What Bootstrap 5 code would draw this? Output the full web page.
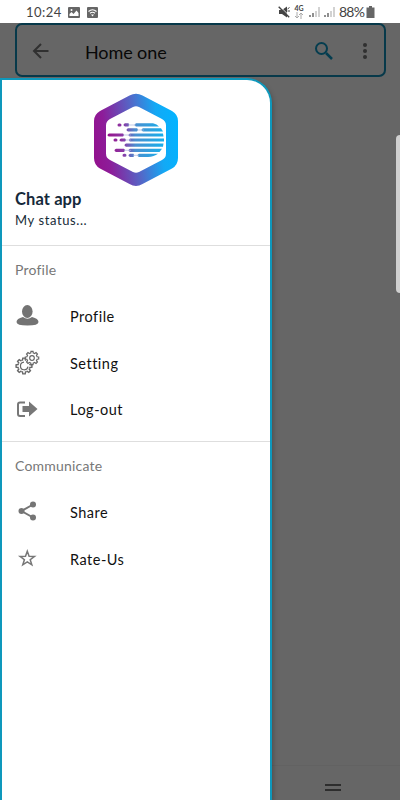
<!DOCTYPE html>
<html lang="en">
<head>
<meta charset="utf-8">
<meta name="viewport" content="width=device-width, initial-scale=1">
<title>Chat app</title>
<link href="https://cdn.jsdelivr.net/npm/bootstrap@5.3.0/dist/css/bootstrap.min.css" rel="stylesheet">
<style>
body{font-family:Lato,"Noto Sans",sans-serif;background:#666;color:#111}
svg{display:block;flex:none}
.phone{width:400px;height:800px;background:#666}
.status{height:23px;padding:1px 25px 0 26px;color:#444}
.clock{font-size:13px;letter-spacing:.45px;width:42px;line-height:22px}
.battery-text{font-size:14px;line-height:22px;letter-spacing:-.75px;width:26px}
.net{font-size:7px;line-height:7px;font-weight:700}
.appbar{height:54px;margin:0 14px 0 15px;border:2px solid #07394a;border-radius:7px;padding:1px 13px 0 12px}
.appbar h1{font-size:18px;letter-spacing:-.1px;margin:2px 0 0 32px;line-height:48px;font-weight:400;color:#080808}
.drawer{left:0;top:78px;width:272px;height:722px;border:2px solid #0e98bc;border-bottom:0;border-radius:0 25px 0 0;box-shadow:1px 3px 5px rgba(0,0,0,.25);background:#fff}
.profile-head{height:166px;padding:12px 13px 0;border-bottom:1.5px solid #dedede}
.app-name{font-size:16.5px;line-height:22px;font-weight:700;color:#15293a;letter-spacing:.1px}
.app-state{font-size:13px;line-height:20px;color:#172c38;letter-spacing:.6px}
.menu-part{height:196px;border-bottom:1.5px solid #dedede}
.menu-part:last-child{border:0}
.menu-title{font-size:14px;line-height:20px;color:#777;padding:14px 0 0 13px;height:47px;letter-spacing:.2px}
.menu-row{height:46.7px;padding:0 0 0 12px;color:#111;font-size:14.5px;letter-spacing:.5px}
.menu-row span{padding-top:1px}
.menu-row svg{margin-right:30px}
.edge-handle{right:0;top:135px;width:4px;height:158px;background:#d0d0d0;border-radius:4px 0 0 4px}
.nav-handle{left:325px;top:784px;width:16px;height:7px;border:solid #2d2d2d;border-width:2px 0}
.nav-line{left:272px;right:0;top:765px;height:1px;background:#626262}
</style>
</head>
<body>
<div class="phone position-relative overflow-hidden">
  <div class="status d-flex align-items-center bg-white">
    <span class="clock">10:24</span>
    <svg width="12" height="11" viewBox="0 0 12 11"><rect width="12" height="11" rx="1" fill="#666"/><path d="M1.5 9V7l2-2 2 2 3-3.500 2 2.500v3z" fill="#fff"/><circle cx="3.500" cy="3" r="1" fill="#fff"/></svg>
    <svg style="margin-left:7px" width="11" height="11" viewBox="0 0 11 11"><rect width="11" height="11" rx="1" fill="#666"/><path d="M1.500 4.500q4-3.500 8 0M3 6.300q2.500-2 5 0" fill="none" stroke="#fff" stroke-width="1.100"/><path d="M4 7.500h3l-1.500 2z" fill="#fff"/></svg>
    <div class="d-flex align-items-center ms-auto">
      <svg width="12" height="12" viewBox="0 0 12 12"><path d="M1 4h3l5-3.500v11L4 8H1z" fill="#444"/><path d="M1.500 0L12 10.500" stroke="#fff"/><path d="M.7 .7l10.500 10.500" stroke="#444" stroke-width="1.400"/><path d="M9.500 3l2-1.500M9.500 5H12" stroke="#444"/></svg>
      <div class="net text-center" style="margin-left:4px">4G
        <svg width="10" height="7" viewBox="0 0 10 7" fill="none" stroke="#aaa"><path d="M3 0v6M1 4l2 2 2-2M7 7V1M5 3l2-2 2 2"/></svg>
      </div>
      <svg style="margin:0 4px 0 5px" width="26" height="12" viewBox="0 0 26 12" stroke-width="1.300"><path d="M1 11V9M4 11V7M16 11V9M19 11V7" stroke="#555"/><path d="M7 11V5M10 11V1M22 11V5M25 11V1" stroke="#bbb"/></svg>
      <span class="battery-text">88%</span>
      <svg style="margin-left:1px" width="9" height="12" viewBox="0 0 9 12"><path d="M3 0h3v1.500h2.500V12h-8V1.500H3z" fill="#666"/></svg>
    </div>
  </div>
  <header class="appbar d-flex align-items-center">
    <svg width="24" height="24" viewBox="0 0 24 24" fill="none" stroke="#303030" stroke-width="2"><path d="M19.500 12H5M12 5l-7 7 7 7"/></svg>
    <h1>Home one</h1>
    <svg class="ms-auto" width="24" height="24" viewBox="0 0 24 24" fill="none" stroke="#053d4f"><circle cx="9.500" cy="9.500" r="5.500" stroke-width="2"/><path d="M14 14l6 6" stroke-width="2.500"/></svg>
    <svg style="margin-left:23px" width="12" height="20" viewBox="0 0 12 20" fill="#303030"><circle cx="6" cy="4" r="2"/><circle cx="6" cy="10" r="2"/><circle cx="6" cy="16" r="2"/></svg>
  </header>
  <div class="nav-line position-absolute"></div>
  <div class="nav-handle position-absolute"></div>
  <div class="edge-handle position-absolute"></div>

  <aside class="drawer position-absolute overflow-hidden">
    <div class="profile-head">
      <svg class="mx-auto" width="88" height="96" viewBox="92 92 88 96">
        <defs>
          <linearGradient id="hex" x1="94" y1="145" x2="178" y2="133" gradientUnits="userSpaceOnUse"><stop offset="0" stop-color="#92138f"/><stop offset=".15" stop-color="#8d1c99"/><stop offset=".5" stop-color="#5368c8"/><stop offset=".78" stop-color="#13a9f5"/><stop offset="1" stop-color="#03b3ff"/></linearGradient>
          <linearGradient id="bars" x1="108" y1="0" x2="163" y2="0" gradientUnits="userSpaceOnUse"><stop offset="0" stop-color="#97118b"/><stop offset=".28" stop-color="#8a3aa6"/><stop offset=".5" stop-color="#4a8fd0"/><stop offset="1" stop-color="#18aeea"/></linearGradient>
        </defs>
        <path d="M129.500 95.500q6.500-3.500 13 0L172 111q6 3.500 6 10v37q0 7-6 10.500L142.500 184q-6.500 4-13 0L100 168.500q-6-3.500-6-10.500v-37q0-6.500 6-10zM133 107l-23 12q-4 2-4 6.500v28q0 4.500 4 6.500l23 12q3 1.500 6 0l23-12q4-2 4-6.500v-28q0-4.500-4-6.500l-23-12q-3-1.500-6 0z" fill="url(#hex)" fill-rule="evenodd"/>
        <path d="M119 123.500h1a1.500 1.500 0 0 1 0 3h-1a1.500 1.500 0 0 1 0-3zM125 123.300h3.500q1.500 1.500 0 3.200H125q-3-1.500 0-3.200zM136 123.200h17q4 1 6 3.300h-23q-3-1.500 0-3.300zM128 128.300h9q2 1.500 0 3.200h-9q-3-1.500 0-3.200zM143 128.300h18l2 3.200h-20q-3-1.500 0-3.200zM109 133.400h14q2 1.500 0 3.200h-14q-3-1.500 0-3.200zM130 133.400h33l.5 3.200H130q-3-1.500 0-3.200zM115 138.500h1a1.500 1.500 0 0 1 0 3h-1a1.500 1.500 0 0 1 0-3zM121 138.400h4q2 1.500 0 3.200h-4q-3-1.500 0-3.200zM130 138.400h34v3.200h-34q-2-1.500 0-3.200zM126 143.600h37.500l-.5 3.200h-37q-3-1.500 0-3.200zM116 148.700h8q2 1.500 0 3.200h-8q-3-1.500 0-3.200zM130 148.700h32l-2.500 3.200H130q-3-1.500 0-3.200zM124 153.800h1a1.500 1.500 0 0 1 0 3h-1a1.500 1.500 0 0 1 0-3zM130 153.700h3.500q1.500 1.500 0 3.200H130q-3-1.500 0-3.200zM139 153.700h19q-4 3-10 3.200h-9q-3-1.500 0-3.200z" fill="url(#bars)"/>
        <path d="M128 125h8M137 130h7M123 135h8M125 140h6M124 150.300h7M133 155.300h6" stroke="#a9b4dc" stroke-width=".7"/>
      </svg>
      <div class="app-name">Chat app</div>
      <div class="app-state">My status...</div>
    </div>
    <nav>
      <section class="menu-part">
        <div class="menu-title">Profile</div>
        <div class="menu-row d-flex align-items-center">
          <svg width="26" height="26" viewBox="0 0 26 26" fill="#737373"><ellipse cx="13.300" cy="8.500" rx="5.300" ry="6.500"/><path d="M9 14q4.500 3.500 9 0 6.500 1.500 6.500 5 0 3.500-11 3.500t-11-3.500q0-3.500 6.500-5z"/></svg>
          <span>Profile</span>
        </div>
        <div class="menu-row d-flex align-items-center">
          <svg width="26" height="26" viewBox="0 0 26 26" fill="none" stroke="#666" stroke-width="1.200">
            <defs><path id="tooth" d="M-1.990-4.800L-1.260-5.050-1-6.700H1L1.260-5.050 1.990-4.800"/></defs>
            <g transform="translate(10 16) scale(1.180)"><use href="#tooth"/><use href="#tooth" transform="rotate(90)"/><use href="#tooth" transform="rotate(135)"/><use href="#tooth" transform="rotate(180)"/><use href="#tooth" transform="rotate(225)"/><use href="#tooth" transform="rotate(270)"/><use href="#tooth" transform="rotate(315)"/></g>
            <path d="M10 12.200a3.800 3.800 0 1 0 4 4.500"/>
            <g transform="translate(18 8)"><circle r="6.500" fill="#fff" stroke="none"/><use href="#tooth"/><use href="#tooth" transform="rotate(45)"/><use href="#tooth" transform="rotate(90)"/><use href="#tooth" transform="rotate(135)"/><use href="#tooth" transform="rotate(180)"/><use href="#tooth" transform="rotate(225)"/><use href="#tooth" transform="rotate(270)"/><use href="#tooth" transform="rotate(315)"/><circle r="2.300"/></g>
          </svg>
          <span>Setting</span>
        </div>
        <div class="menu-row d-flex align-items-center">
          <svg width="26" height="26" viewBox="0 0 26 26"><path d="M11 5.500H6q-2 0-2 2v9.500q0 2 2 2h5" fill="none" stroke="#777" stroke-width="2"/><path d="M8.500 9H15V4.500l8.500 7.500-8.500 7.500V15H8.500z" fill="#777"/></svg>
          <span>Log-out</span>
        </div>
      </section>
      <section class="menu-part">
        <div class="menu-title">Communicate</div>
        <div class="menu-row d-flex align-items-center">
          <svg width="26" height="26" viewBox="0 0 26 26" fill="#757575"><path d="M19 5.500L7.500 12 19 18.500" fill="none" stroke="#757575" stroke-width="2"/><circle cx="19" cy="5.500" r="3"/><circle cx="7.500" cy="12" r="3"/><circle cx="19" cy="18.500" r="3"/></svg>
          <span>Share</span>
        </div>
        <div class="menu-row d-flex align-items-center">
          <svg width="26" height="26" viewBox="0 0 26 26" fill="none" stroke="#777" stroke-width="1.500"><path d="M13.300 5.200l1.800 5.100 5.400.1-4.300 3.300 1.600 5.100-4.500-3-4.500 3 1.600-5.100-4.300-3.300 5.400-.1z"/></svg>
          <span>Rate-Us</span>
        </div>
      </section>
    </nav>
  </aside>
</div>
<script src="https://cdn.jsdelivr.net/npm/bootstrap@5.3.0/dist/js/bootstrap.bundle.min.js"></script>
</body>
</html>
